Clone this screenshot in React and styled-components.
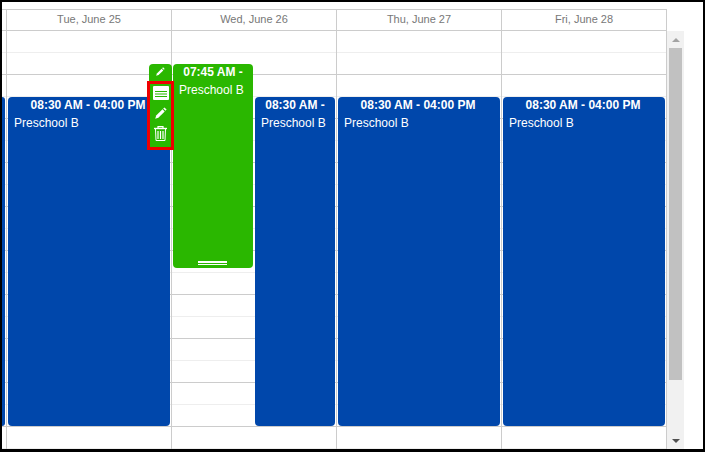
import React from 'react';
import styled, { createGlobalStyle } from 'styled-components';

const GlobalStyle = createGlobalStyle`
  html, body {
    margin: 0;
    padding: 0;
    background: #fff;
    font-family: "Liberation Sans", Arial, sans-serif;
  }
`;

const days = [
  { width: 5, label: '', events: [{ top: 66, left: 0, width: 3, height: 329, color: '#0047ab', sliver: true }] },
  { width: 165, label: 'Tue, June 25', events: [{ top: 66, left: 1, width: 162, height: 329, color: '#0047ab', time: '08:30 AM - 04:00 PM' }] },
  {
    width: 165,
    label: 'Wed, June 26',
    events: [
      { top: 33, left: 1, width: 80, height: 204, color: '#2ab700', time: '07:45 AM -', active: true },
      { top: 66, left: 83, width: 80, height: 329, color: '#0047ab', time: '08:30 AM -' },
    ],
  },
  { width: 165, label: 'Thu, June 27', events: [{ top: 66, left: 1, width: 162, height: 329, color: '#0047ab', time: '08:30 AM - 04:00 PM' }] },
  { width: 165, label: 'Fri, June 28', events: [{ top: 66, left: 1, width: 162, height: 329, color: '#0047ab', time: '08:30 AM - 04:00 PM' }] },
];

const slots = Array.from({ length: 19 }, (_, i) => i);

const Frame = styled.div`
  box-sizing: border-box;
  width: 705px;
  height: 452px;
  border-style: solid;
  border-color: #000;
  border-width: 2px 2px 3px 2px;
  padding-top: 7px;
  overflow: hidden;
  background: #fff;
`;

const Header = styled.div`
  display: flex;
  width: 665px;
  height: 22px;
  box-sizing: border-box;
  border-top: 1px solid #ccc;
  border-bottom: 1px solid #ccc;
`;

const HeaderCell = styled.div`
  box-sizing: border-box;
  width: ${(p) => p.$width}px;
  border-right: 1px solid #ccc;
  color: #777;
  font-size: 11px;
  line-height: 19px;
  text-align: center;
`;

const Scroller = styled.div`
  display: flex;
  height: 418px;
`;

const Grid = styled.div`
  display: flex;
  width: 665px;
  height: 418px;
  overflow: hidden;
`;

const DayColumn = styled.div`
  position: relative;
  box-sizing: border-box;
  width: ${(p) => p.$width}px;
  border-right: 1px solid #ccc;
`;

const Slot = styled.div`
  box-sizing: border-box;
  height: 22px;
  border-bottom: 1px solid ${(p) => (p.$major ? '#ccc' : '#eee')};
`;

const Event = styled.div`
  position: absolute;
  top: ${(p) => p.$top}px;
  left: ${(p) => p.$left}px;
  width: ${(p) => p.$width}px;
  height: ${(p) => p.$height}px;
  background: ${(p) => p.$color};
  border-radius: ${(p) => (p.$sliver ? '0 3px 3px 0' : '4px')};
  color: #fff;
  font-size: 12px;
`;

const EventTime = styled.div`
  height: 15px;
  padding-top: 1px;
  padding-right: ${(p) => (p.$narrow ? 0 : 2)}px;
  font-weight: bold;
  line-height: 15px;
  text-align: center;
  white-space: nowrap;
`;

const EventTitle = styled.div`
  padding: 3px 6px 0;
  line-height: 14px;
`;

const ResizeHandle = styled.div`
  position: absolute;
  left: 25px;
  bottom: 3px;
  width: 29px;
  height: 1px;
  border-top: 2px solid #fff;
  border-bottom: 1px solid #fff;
`;

const ActionRail = styled.div`
  position: absolute;
  top: 0;
  left: -26px;
  width: 27px;
  display: flex;
  flex-direction: column;
  align-items: center;
`;

const ActionTab = styled.div`
  box-sizing: border-box;
  width: 23px;
  height: 17px;
  padding-bottom: 3px;
  background: #2ab700;
  border-radius: 4px 4px 0 0;
  display: flex;
  align-items: center;
  justify-content: center;
`;

const ActionBox = styled.div`
  box-sizing: border-box;
  width: 27px;
  height: 69px;
  padding-top: 2px;
  border: 3px solid #ee0000;
  background: #2ab700;
  display: flex;
  flex-direction: column;
  align-items: center;
  gap: 7px;
`;

const Scrollbar = styled.div`
  box-sizing: border-box;
  width: 17px;
  height: 418px;
  background: #f1f1f1;
  display: flex;
  flex-direction: column;
  align-items: center;
`;

const ArrowCell = styled.div`
  height: 17px;
  flex: none;
  display: flex;
  align-items: center;
  justify-content: center;
`;

const Arrow = styled.div`
  width: 0;
  height: 0;
  border-left: 4px solid transparent;
  border-right: 4px solid transparent;
  ${(p) => (p.$down ? 'border-top: 4px solid #505050;' : 'border-bottom: 4px solid #a3a3a3;')}
`;

const Thumb = styled.div`
  width: 13px;
  height: 332px;
  flex: none;
  background: #c1c1c1;
`;

const ScrollRest = styled.div`
  flex: 1;
`;

// slim diagonal pencil, eraser cap split off from the body by a thin gap
const PencilIcon = ({ size }) => (
  <svg width={size} height={size} viewBox="0 0 12 12" fill="#fff" style={{ display: 'block' }}>
    <path d="M9.4 0.4 L11.6 2.6 L10.4 3.8 L8.2 1.6 Z" />
    <path d="M7.5 2.3 L9.7 4.5 L3.4 10.8 L0.2 11.8 L1.2 8.6 Z" />
  </svg>
);

const ListIcon = () => (
  <svg width="16" height="14" viewBox="0 0 16 14" style={{ display: 'block' }}>
    <rect x="0" y="0" width="16" height="14" rx="1" fill="#fff" />
    <path d="M2 5.5H14M2 8H14M2 10.5H14" stroke="#2ab700" strokeWidth="1" />
  </svg>
);

const TrashIcon = () => (
  <svg width="13" height="15" viewBox="0 0 13 15" fill="none" stroke="#fff" style={{ display: 'block' }}>
    <path d="M0 2.5H13" strokeWidth="1.4" />
    <path d="M4 2V0.6H9V2" strokeWidth="1.2" />
    <path d="M1.5 3L2 14.5H11L11.5 3" />
    <path d="M4 5V13M6.5 5V13M9 5V13" strokeWidth="1.2" />
  </svg>
);

const Actions = () => (
  <ActionRail>
    <ActionTab>
      <PencilIcon size={9} />
    </ActionTab>
    <ActionBox>
      <ListIcon />
      <PencilIcon size={12} />
      <TrashIcon />
    </ActionBox>
  </ActionRail>
);

const App = () => (
  <>
    <GlobalStyle />
    <Frame>
      <Header>
        {days.map((day, i) => (
          <HeaderCell key={i} $width={day.width}>{day.label}</HeaderCell>
        ))}
      </Header>
      <Scroller>
        <Grid>
          {days.map((day, i) => (
            <DayColumn key={i} $width={day.width}>
              {slots.map((n) => (
                <Slot key={n} $major={n % 2 === 1 && n !== 18} />
              ))}
              {day.events.map((ev, j) => (
                <Event key={j} $top={ev.top} $left={ev.left} $width={ev.width} $height={ev.height} $color={ev.color} $sliver={ev.sliver}>
                  {!ev.sliver && <EventTime $narrow={ev.width < 100}>{ev.time}</EventTime>}
                  {!ev.sliver && <EventTitle>Preschool B</EventTitle>}
                  {ev.active && <Actions />}
                  {ev.active && <ResizeHandle />}
                </Event>
              ))}
            </DayColumn>
          ))}
        </Grid>
        <Scrollbar>
          <ArrowCell><Arrow /></ArrowCell>
          <Thumb />
          <ScrollRest />
          <ArrowCell><Arrow $down /></ArrowCell>
        </Scrollbar>
      </Scroller>
    </Frame>
  </>
);

export default App;
